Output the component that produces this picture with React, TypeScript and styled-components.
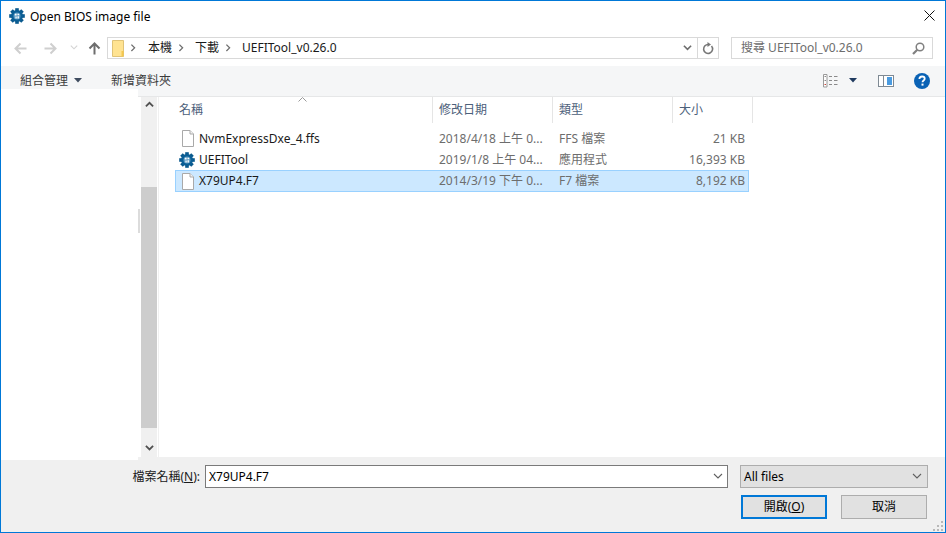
import React from "react";
import styled, { createGlobalStyle } from "styled-components";

const FONT = `"Noto Sans", "Noto Sans CJK TC", "Liberation Sans", sans-serif`;

const Global = createGlobalStyle`
  html, body { margin: 0; padding: 0; background: #fff; overflow: hidden; }
  * { box-sizing: border-box; }
`;

const Win = styled.div`
  width: 946px; height: 533px; border: 1px solid #0078d7; background: #fff;
  display: flex; flex-direction: column; font: 12px/16px ${FONT}; color: #1a1a1a;
  overflow: hidden; position: relative;
`;
const TitleBar = styled.div`
  height: 29px; display: flex; align-items: center; padding: 0 10px 0 8px; flex: none;
`;
const TitleText = styled.span` margin-left: 5px; flex: 1; color: #000; position: relative; top: 1px; `;
const NavBar = styled.div`
  height: 36px; flex: none; display: flex; padding: 7px 12px 7px 13px; align-items: flex-start;
`;
const NavIcon = styled.span<{ $w: number; $ml?: number }>`
  display: flex; width: ${p => p.$w}px; height: 22px; margin-left: ${p => p.$ml ?? 0}px;
  align-items: center; justify-content: center; flex: none;
`;
const AddressBox = styled.div`
  width: 612px; height: 22px; margin-left: 6px; border: 1px solid #d9d9d9; display: flex; align-items: center; flex: none;
`;
const Crumbs = styled.div` display: flex; align-items: center; flex: 1; padding-left: 4px; color: #1a1a1a; `;
const Crumb = styled.span``;
const CrumbSep = styled.span<{ $after?: number }>`
  display: flex; width: 8px; margin: 0 ${p => p.$after ?? 10}px 0 5px; justify-content: center;
`;
const AddressEnd = styled.span`
  width: 21px; height: 100%; border-left: 1px solid #d9d9d9; display: flex; align-items: center; justify-content: center;
`;
const SearchBox = styled.div`
  width: 202px; height: 22px; margin-left: 12px; border: 1px solid #d9d9d9; display: flex; align-items: center;
  padding: 0 7px 0 9px; color: #6d6d6d; flex: none; justify-content: space-between;
`;
const Toolbar = styled.div`
  height: 31px; flex: none; background: #f5f6f7; border-bottom: 1px solid #e6e7e8; display: flex; align-items: center;
  padding: 0 15px 1px 19px; color: #3b3b3b;
`;
const ToolLabel = styled.span<{ $ml?: number }>` margin-left: ${p => p.$ml ?? 0}px; letter-spacing: 0; `;
const ToolIcon = styled.span<{ $ml: number }>` display: flex; margin-left: ${p => p.$ml}px; `;
const Spacer = styled.div` flex: 1; `;
const Body = styled.div` flex: 1; display: flex; min-height: 0; background: #fff; `;
const Sidebar = styled.div`
  width: 137px; flex: none; background: #fff; margin: -8px 0 -3px; position: relative; z-index: 2;
`;
const Splitter = styled.div`
  width: 3px; flex: none; display: flex; align-items: flex-start; padding-top: 112px;
`;
const SplitHandle = styled.div` width: 2px; height: 24px; background: #dcdcdc; `;
const ScrollTrack = styled.div`
  width: 16px; flex: none; background: #f0f0f0; display: flex; flex-direction: column;
`;
const ScrollBtn = styled.div` height: 17px; flex: none; display: flex; align-items: center; justify-content: center; `;
const ScrollThumbGap = styled.div` height: 73px; flex: none; `;
const ScrollThumb = styled.div` height: 241px; background: #cdcdcd; flex: none; `;
const ScrollFill = styled.div` flex: 1; `;
const Main = styled.div`
  flex: 1; margin-left: 1px; border-left: 1px solid #f0f0f0; padding-left: 14px; position: relative; background: #fff;
`;
const Header = styled.div` display: flex; height: 26px; `;
const HeaderCell = styled.div<{ $w: number }>`
  width: ${p => p.$w}px; border-right: 1px solid #e5e5e5; padding-left: 6px; color: #4c607a; display: flex; align-items: center;
  height: 26px;
`;
const SortCaret = styled.span` position: absolute; left: 139px; top: 0; display: flex; `;
const Rows = styled.div` margin: 5px 0 0 2px; width: 574px; `;
const Row = styled.div<{ $sel?: boolean; $h: number }>`
  height: ${p => p.$h}px; display: grid; grid-template-columns: 263px 120px 120px 1fr; align-items: center; padding-right: 3px;
  border: 1px solid ${p => (p.$sel ? "#99d1ff" : "transparent")};
  background: ${p => (p.$sel ? "#cce8ff" : "transparent")};
`;
const NameCell = styled.div<{ $pad: number }>` display: flex; align-items: center; padding-left: ${p => p.$pad}px; color: #1a1a1a; `;
const NameText = styled.span<{ $ml: number }>` margin-left: ${p => p.$ml}px; `;
const Cell = styled.div<{ $right?: boolean }>` color: #6d6d6d; text-align: ${p => (p.$right ? "right" : "left")}; white-space: nowrap; `;
const Footer = styled.div`
  height: 75px; flex: none; background: #f0f0f0; padding: 8px 17px 0 0; position: relative;
`;
const FileRow = styled.div` display: flex; align-items: center; height: 23px; padding-left: 130px; `;
const FileLabel = styled.label` width: 70px; padding-right: 1px; text-align: right; color: #1a1a1a; white-space: nowrap; flex: none; `;
const FileInput = styled.div`
  width: 523px; height: 23px; margin-left: 4px; background: #fff; border: 1px solid #7a7a7a; display: flex; align-items: center;
  justify-content: space-between; padding: 0 4px 0 3px; color: #000; flex: none;
`;
const TypeSelect = styled.div`
  width: 188px; height: 23px; margin-left: 12px; background: #e1e1e1; border: 1px solid #adadad; display: flex; align-items: center;
  justify-content: space-between; padding: 0 5px 0 3px; color: #000; flex: none;
`;
const ButtonRow = styled.div` display: flex; justify-content: flex-end; gap: 14px; margin: 7px 1px 0 0; `;
const Btn = styled.button<{ $primary?: boolean }>`
  width: 86px; height: 24px; padding: 0; background: #e1e1e1; font: 12px/16px ${FONT}; color: #000;
  border: ${p => (p.$primary ? "2px solid #0078d7" : "1px solid #adadad")}; border-radius: 0;
`;
const Grip = styled.span` position: absolute; right: 1px; bottom: 0; display: flex; `;

const Gear = () => {
  const teeth = [0, 45, 90, 135, 180, 225, 270, 315];
  return (
    <svg width="16" height="16" viewBox="0 0 16 16" style={{ flex: "none" }}>
      {teeth.map(a => (
        <rect key={a} x="6.2" y="0.2" width="3.6" height="3.4" fill="#0b5a8e" transform={`rotate(${a} 8 8)`} />
      ))}
      <circle cx="8" cy="8" r="6" fill="#0b5f96" />
      <circle cx="8" cy="8" r="3.5" fill="#5f9cc4" />
      <path d="M5.800 5.800h1.800v1.800H5.800zM8.500 5.800h1.700v1.500H8.500zM6.400 8.400h1.300v2H6.400zM8.500 8.200h1.400v2.200H8.500z" fill="#fff" />
    </svg>
  );
};
const FileIcon = () => (
  <svg width="14" height="17" viewBox="0 0 14 17" style={{ flex: "none" }}>
    <path d="M1.500.5h7.500l3.500 3.500v12.500h-11z" fill="#fff" stroke="#a9a9a9" />
    <path d="M9 .5v3.500h3.500" fill="#f3f3f3" stroke="#a9a9a9" />
  </svg>
);
const Arrow = ({ dir, color }: { dir: "l" | "r" | "u"; color: string }) => {
  const rot = dir === "l" ? 0 : dir === "r" ? 180 : 90;
  return (
    <svg width="13" height="13" viewBox="0 0 13 13" style={{ transform: `rotate(${rot}deg)` }}>
      <path d="M12.500 6.500H1.500M6.500 1.500l-5 5 5 5" fill="none" stroke={color} strokeWidth="2" />
    </svg>
  );
};
const Chev = ({ dir = "d", color = "#6d6d6d", w = 9, sw = 1.8 }: { dir?: "d" | "u" | "r"; color?: string; w?: number; sw?: number }) => {
  const d = dir === "d" ? "M1 2l4 4 4-4" : dir === "u" ? "M1 6l4-4 4 4" : "M3 0.800l4 4-4 4";
  return (
    <svg width={w} height={w * 0.9} viewBox="0 0 10 9">
      <path d={d} fill="none" stroke={color} strokeWidth={sw} />
    </svg>
  );
};

const files = [
  { name: "NvmExpressDxe_4.ffs", date: "2018/4/18 上午 0...", type: "FFS 檔案", size: "21 KB", icon: "file", h: 21 },
  { name: "UEFITool", date: "2019/1/8 上午 04...", type: "應用程式", size: "16,393 KB", icon: "app", h: 21 },
  { name: "X79UP4.F7", date: "2014/3/19 下午 0...", type: "F7 檔案", size: "8,192 KB", icon: "file", sel: true, h: 22 },
];

export default function App() {
  return (
    <>
      <Global />
      <Win>
        <TitleBar>
          <Gear />
          <TitleText>Open BIOS image file</TitleText>
          <svg width="11" height="11" viewBox="0 0 11 11">
            <path d="M.5.500l10 10M10.500.500l-10 10" stroke="#111" strokeWidth="1" fill="none" />
          </svg>
        </TitleBar>
        <NavBar>
          <NavIcon $w={13}><Arrow dir="l" color="#cfcfcf" /></NavIcon>
          <NavIcon $w={13} $ml={17}><Arrow dir="r" color="#cfcfcf" /></NavIcon>
          <NavIcon $w={8} $ml={13}><Chev color="#d4d4d4" w={8} sw={1.4} /></NavIcon>
          <NavIcon $w={13} $ml={10}><Arrow dir="u" color="#6d6d6d" /></NavIcon>
          <AddressBox>
            <Crumbs>
              <svg width="12" height="17" viewBox="0 0 12 17" style={{ flex: "none" }}>
                <path d="M.5.500h11v16H.5z" fill="#ffe391" stroke="#e0c377" />
                <path d="M9.500 11h2v5.500h-2z" fill="#f5c84f" />
              </svg>
              <CrumbSep $after={11}><Chev dir="r" w={8} sw={1.6} /></CrumbSep>
              <Crumb>本機</Crumb>
              <CrumbSep><Chev dir="r" w={8} sw={1.6} /></CrumbSep>
              <Crumb>下載</Crumb>
              <CrumbSep><Chev dir="r" w={8} sw={1.6} /></CrumbSep>
              <Crumb>UEFITool_v0.26.0</Crumb>
            </Crumbs>
            <NavIcon $w={20}><Chev w={9} sw={1.8} /></NavIcon>
            <AddressEnd>
              <svg width="12" height="13" viewBox="0 0 12 13">
                <path d="M9.500 4a4.500 4.500 0 1 1-2.700-1.500" fill="none" stroke="#777" strokeWidth="1.600" />
                <path d="M5.500 0v5l3.500-2.500z" fill="#777" />
              </svg>
            </AddressEnd>
          </AddressBox>
          <SearchBox>
            <span>搜尋 UEFITool_v0.26.0</span>
            <svg width="13" height="13" viewBox="0 0 13 13">
              <circle cx="8" cy="5" r="3.800" fill="none" stroke="#808080" strokeWidth="1.500" />
              <path d="M5.300 7.700L1 12" stroke="#808080" strokeWidth="2.200" />
            </svg>
          </SearchBox>
        </NavBar>
        <Toolbar>
          <ToolLabel>組合管理</ToolLabel>
          <ToolIcon $ml={6}><svg width="8" height="5" viewBox="0 0 8 5"><path d="M0 0h8L4 4.500z" fill="#3f4c5f" /></svg></ToolIcon>
          <ToolLabel $ml={29}>新增資料夾</ToolLabel>
          <Spacer />
          <ToolIcon $ml={0}>
            <svg width="16" height="14" viewBox="0 0 16 14">
              <path d="M.5.500h3.500v12.500H.5z" fill="#fff" stroke="#9a9a9a" />
              <path d="M1.500 2.500h1.500M1.500 6.500h1.500" stroke="#8a8a8a" />
              <path d="M1.500 10.500h1.500" stroke="#c9483b" />
              <path d="M6 2.500h3M11 2.500h3.500M6 6.500h3M11 6.500h3.500M6 10.500h3M11 10.500h3.500" stroke="#8a8a8a" />
            </svg>
          </ToolIcon>
          <ToolIcon $ml={10}><svg width="8" height="5" viewBox="0 0 8 5"><path d="M0 0h8L4 4.500z" fill="#1f3a5f" /></svg></ToolIcon>
          <ToolIcon $ml={21}>
            <svg width="16" height="12" viewBox="0 0 16 12">
              <rect x=".5" y=".5" width="15" height="11" fill="#fff" stroke="#7f8a94" />
              <path d="M5.500 1v10" stroke="#7f8a94" />
              <rect x="9" y="2" width="5" height="8" fill="#4a9be0" />
            </svg>
          </ToolIcon>
          <ToolIcon $ml={20}>
            <svg width="16" height="16" viewBox="0 0 16 16">
              <circle cx="8" cy="8" r="8" fill="#0a62b5" />
              <path d="M5.400 6.100c0-1.700 1.200-2.600 2.700-2.600s2.600.9 2.600 2.200c0 1.900-2.200 1.800-2.200 3.500" fill="none" stroke="#fff" strokeWidth="1.800" />
              <rect x="7.500" y="10.600" width="2" height="2" fill="#fff" />
            </svg>
          </ToolIcon>
        </Toolbar>
        <Body>
          <Sidebar />
          <Splitter><SplitHandle /></Splitter>
          <ScrollTrack>
            <ScrollBtn><Chev dir="u" color="#505050" w={9} sw={2} /></ScrollBtn>
            <ScrollThumbGap />
            <ScrollThumb />
            <ScrollFill />
            <ScrollBtn><Chev color="#505050" w={9} sw={2} /></ScrollBtn>
          </ScrollTrack>
          <Main>
            <SortCaret>
              <svg width="9" height="5" viewBox="0 0 9 5"><path d="M.5 4.500l4-4 4 4" fill="none" stroke="#9a9a9a" /></svg>
            </SortCaret>
            <Header>
              <HeaderCell $w={260}>名稱</HeaderCell>
              <HeaderCell $w={120}>修改日期</HeaderCell>
              <HeaderCell $w={120}>類型</HeaderCell>
              <HeaderCell $w={80}>大小</HeaderCell>
            </Header>
            <Rows>
              {files.map(f => (
                <Row key={f.name} $sel={f.sel} $h={f.h}>
                  <NameCell $pad={f.icon === "app" ? 3 : 5}>
                    {f.icon === "app" ? <Gear /> : <FileIcon />}
                    <NameText $ml={4}>{f.name}</NameText>
                  </NameCell>
                  <Cell>{f.date}</Cell>
                  <Cell>{f.type}</Cell>
                  <Cell $right>{f.size}</Cell>
                </Row>
              ))}
            </Rows>
          </Main>
        </Body>
        <Footer>
          <FileRow>
            <FileLabel>檔案名稱(<u>N</u>):</FileLabel>
            <FileInput>
              <span>X79UP4.F7</span>
              <Chev color="#606060" w={10} sw={1.1} />
            </FileInput>
            <TypeSelect>
              <span>All files</span>
              <Chev color="#606060" w={10} sw={1.1} />
            </TypeSelect>
          </FileRow>
          <ButtonRow>
            <Btn $primary>開啟(<u>O</u>)</Btn>
            <Btn>取消</Btn>
          </ButtonRow>
          <Grip>
            <svg width="11" height="11" viewBox="0 0 11 11">
              <path d="M8 0h2v2H8zM4 4h2v2H4zM8 4h2v2H8zM0 8h2v2H0zM4 8h2v2H4zM8 8h2v2H8z" fill="#b8b8b8" />
            </svg>
          </Grip>
        </Footer>
      </Win>
    </>
  );
}
